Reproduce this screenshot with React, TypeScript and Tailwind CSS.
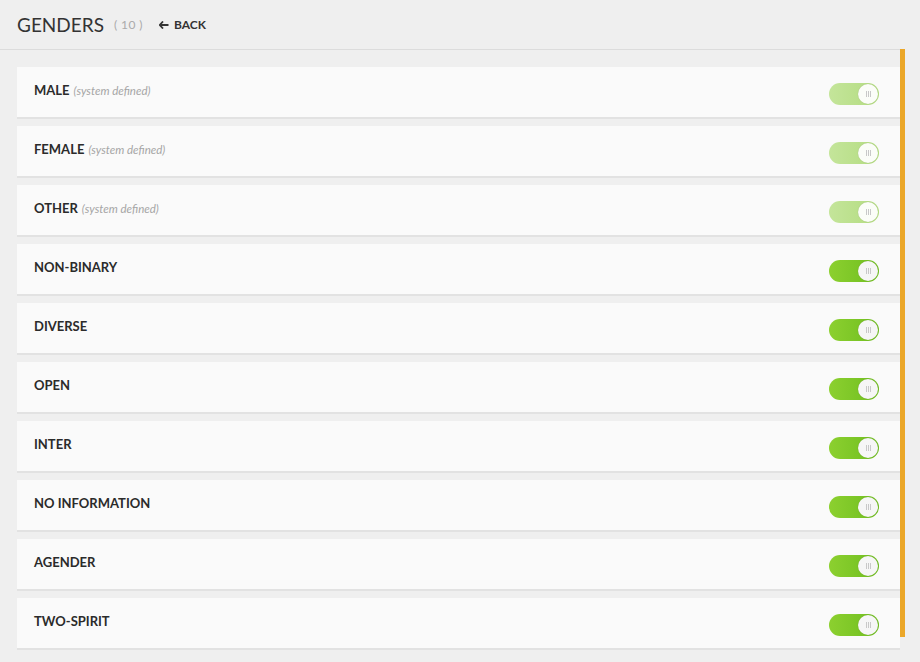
import React from "react";

const items: { name: string; sys: boolean }[] = [
  { name: "MALE", sys: true },
  { name: "FEMALE", sys: true },
  { name: "OTHER", sys: true },
  { name: "NON-BINARY", sys: false },
  { name: "DIVERSE", sys: false },
  { name: "OPEN", sys: false },
  { name: "INTER", sys: false },
  { name: "NO INFORMATION", sys: false },
  { name: "AGENDER", sys: false },
  { name: "TWO-SPIRIT", sys: false },
];

function Toggle({ faded }: { faded: boolean }) {
  return (
    <div
      className={`mt-[4px] w-[50px] h-[22px] rounded-full flex items-center justify-end pr-[1px] ${
        faded
          ? "bg-gradient-to-r from-[#c4e59a] to-[#b3dc80]"
          : "bg-gradient-to-r from-[#8cd02f] to-[#6fbe1f]"
      }`}
    >
      <div
        className={`w-[20px] h-[20px] rounded-full flex items-center justify-center gap-[1px] ${
          faded ? "bg-[#fbfdf8]" : "bg-[#f6f6f6]"
        } shadow-[0_0_1px_rgba(0,0,0,0.2)]`}
      >
        <span className="w-[1px] h-[6px] bg-[#c8c8c8]" />
        <span className="w-[1px] h-[6px] bg-[#c8c8c8]" />
        <span className="w-[1px] h-[6px] bg-[#c8c8c8]" />
      </div>
    </div>
  );
}

export default function App() {
  return (
    <div
      className="relative w-[920px] h-[662px] bg-[#efefef] overflow-hidden"
      style={{ fontFamily: "Lato, 'Noto Sans', sans-serif" }}
    >
      <div className="h-[50px] flex items-center pl-[17px] border-b border-[#dcdcdc] w-[904px]">
        <span className="text-[19px] text-[#333] leading-none">GENDERS</span>
        <span className="ml-[10px] text-[12px] text-[#aaa] tracking-[0.4px]">( 10 )</span>
        <span className="ml-[16px] flex items-center gap-[5px] text-[12px] font-bold text-[#333]">
          <svg width="10" height="8" viewBox="0 0 10 8">
            <path d="M4 0.5 L0.8 4 L4 7.5 M1 4 H9.5" stroke="#333" strokeWidth="1.8" fill="none" />
          </svg>
          BACK
        </span>
      </div>
      <div className="absolute left-[900px] top-[49px] w-[5px] h-[588px] bg-[#eba729]" />
      <div className="flex flex-col gap-[7px] pl-[17px] pt-[17px] w-[900px]">
        {items.map((it) => (
          <div
            key={it.name}
            className="h-[52px] bg-[#fafafa] border-b-2 border-[#e2e2e2] flex items-center justify-between pl-[17px] pr-[21px]"
          >
            <div className="flex items-baseline gap-[4px] mb-[3px]">
              <span className="text-[13px] font-bold text-[#2b2b2b]">{it.name}</span>
              {it.sys && (
                <span className="text-[11.5px] italic text-[#a5a5a5]">(system defined)</span>
              )}
            </div>
            <Toggle faded={it.sys} />
          </div>
        ))}
      </div>
    </div>
  );
}
